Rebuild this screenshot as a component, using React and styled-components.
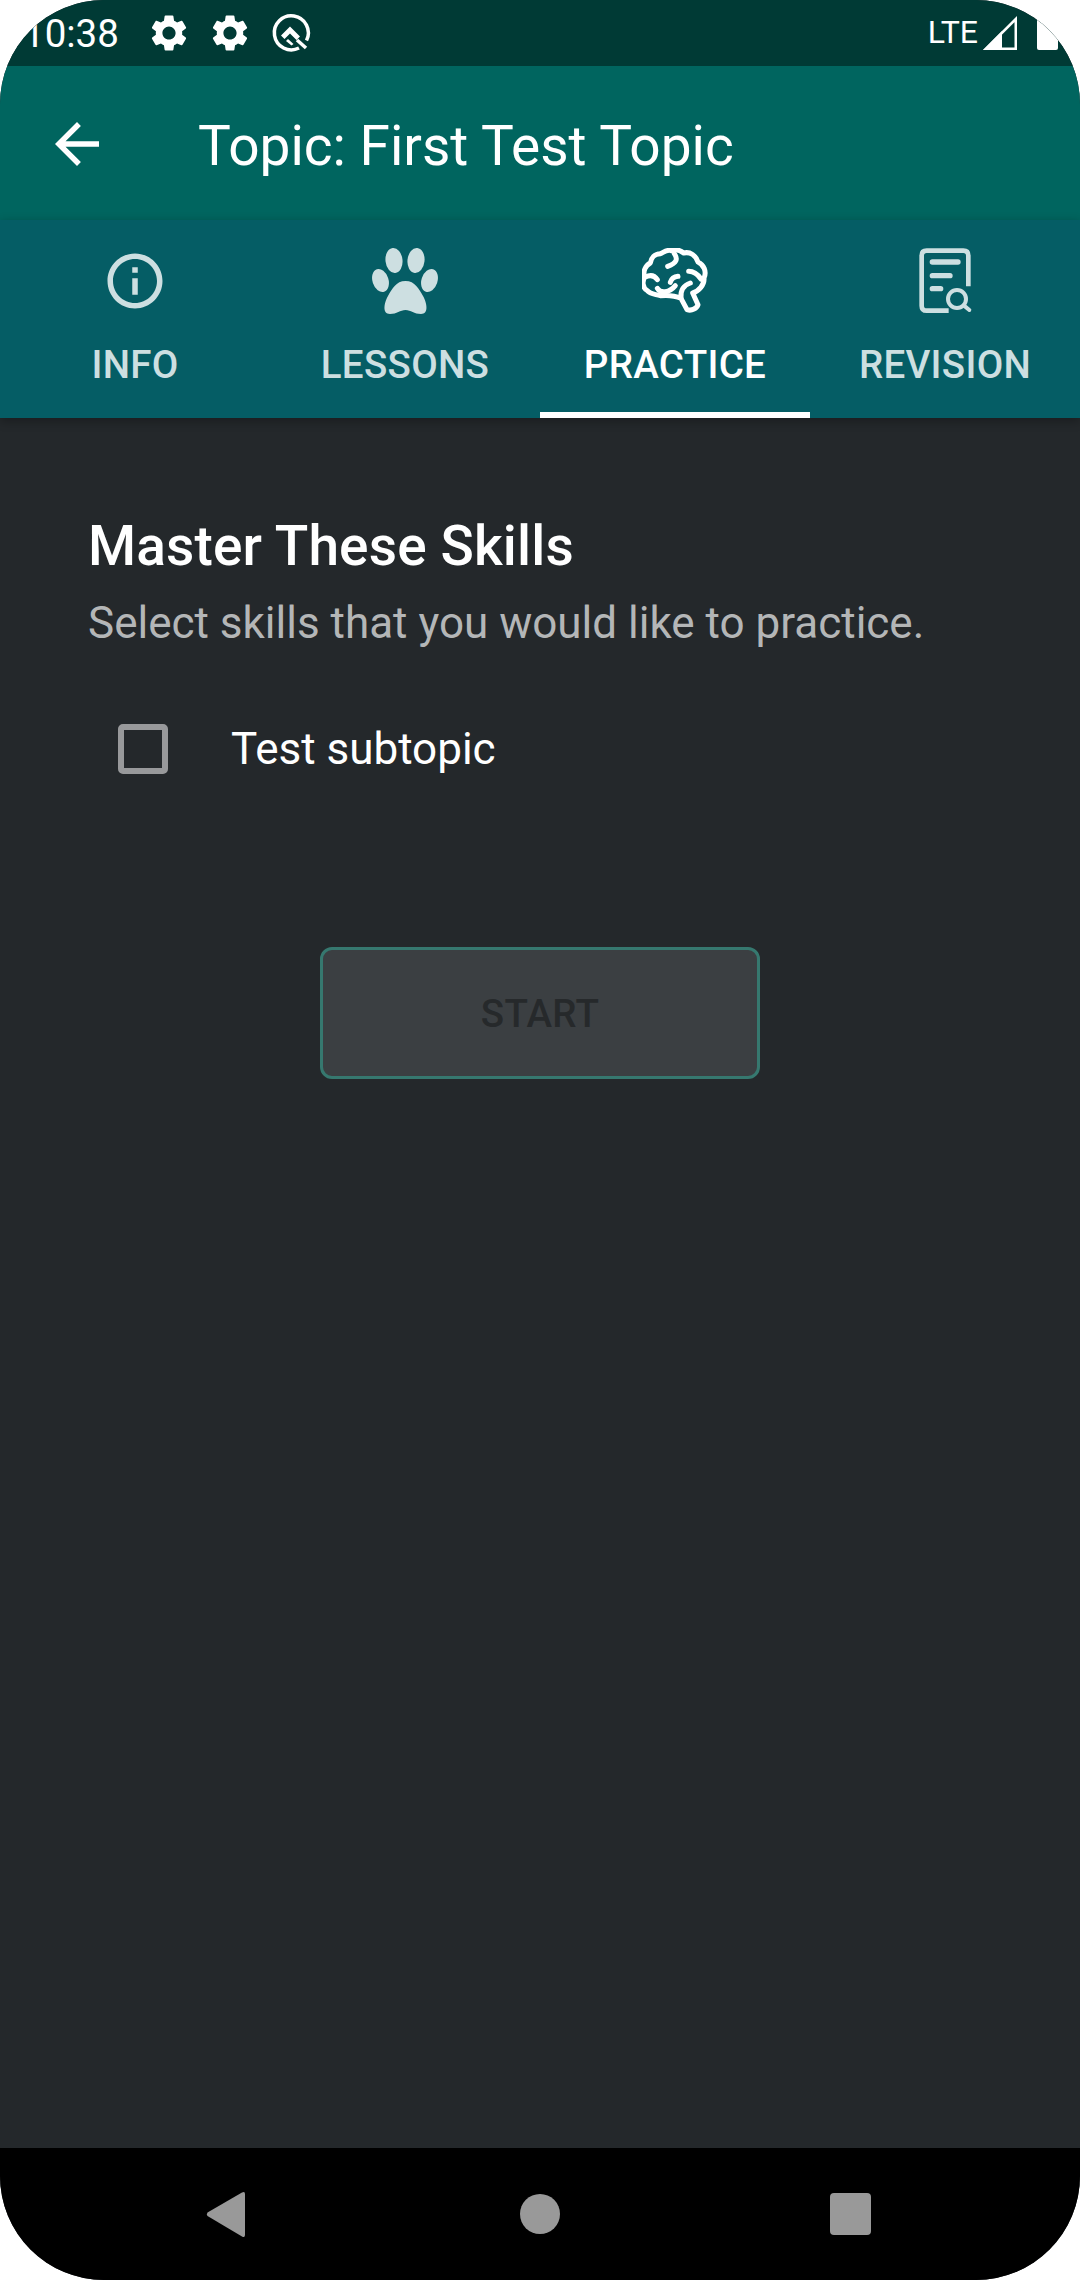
import React from 'react';
import styled, { createGlobalStyle } from 'styled-components';
import { MdArrowBack, MdInfoOutline, MdSettings } from 'react-icons/md';

const GlobalStyle = createGlobalStyle`
  body {
    margin: 0;
    background: #fff;
    font-family: Roboto, "Liberation Sans", sans-serif;
  }
`;

const Screen = styled.div`
  width: 1080px;
  height: 2280px;
  display: flex;
  flex-direction: column;
  overflow: hidden;
  border-radius: 104px;
  background: #24282b;
`;

const StatusBar = styled.div`
  height: 66px;
  flex: none;
  display: flex;
  align-items: center;
  justify-content: space-between;
  padding: 0 22px 0 23px;
  background: #003a35;
  color: #fff;
`;

const StatusGroup = styled.div`
  display: flex;
  align-items: center;
  gap: ${(p) => p.$gap || 0}px;
`;

const Time = styled.span`
  font-size: 38.5px;
  line-height: 44px;
  width: 107px;
  margin-top: 1px;
`;

const Lte = styled.span`
  font-size: 32px;
  line-height: 40px;
  margin: -2px 2px 0 0;
`;

const Battery = styled.div`
  width: 21px;
  height: 32px;
  margin: 2px 0 0 17px;
  border-radius: 2px;
  background: #fff;
`;

const AppBar = styled.div`
  height: 154px;
  flex: none;
  display: flex;
  align-items: center;
  background: #00655f;
  color: #fff;
`;

const BackButton = styled.div`
  width: 198px;
  padding-left: 44px;
  box-sizing: border-box;
  display: flex;
  font-size: 66px;
  margin-top: 2px;
`;

const Title = styled.h1`
  margin: 6px 0 0;
  font-size: 55px;
  font-weight: 400;
  line-height: 64px;
`;

const Tabs = styled.div`
  height: 198px;
  flex: none;
  display: grid;
  grid-template-columns: repeat(4, 270px);
  background: #055d65;
  position: relative;
  box-shadow: 0 3px 10px rgba(0, 0, 0, 0.3);
`;

const Tab = styled.div`
  display: flex;
  flex-direction: column;
  align-items: center;
  padding-top: 28px;
  box-sizing: border-box;
  color: ${(p) => (p.$active ? '#fff' : '#cddfe1')};
  border-bottom: 6px solid ${(p) => (p.$active ? '#fff' : 'transparent')};
`;

const TabIcon = styled.div`
  width: 66px;
  height: 66px;
  display: flex;
  font-size: 66px;
`;

const TabLabel = styled.div`
  margin-top: 29px;
  font-size: 38.5px;
  font-weight: 500;
  line-height: 44px;
  letter-spacing: 0.3px;
`;

const Content = styled.div`
  flex: 1;
  padding: 96px 88px 0;
  display: flex;
  flex-direction: column;
`;

const Heading = styled.h2`
  margin: 0;
  font-size: 55px;
  font-weight: 500;
  line-height: 64px;
  letter-spacing: 0.15px;
  color: #fff;
`;

const Subheading = styled.p`
  margin: 19px 0 0;
  font-size: 44px;
  line-height: 52px;
  color: #b4b6b7;
`;

const SkillRow = styled.label`
  display: flex;
  align-items: center;
  margin: 74px 0 0 30px;
  font-size: 44px;
  line-height: 52px;
  color: #fff;
`;

const Checkbox = styled.span`
  width: 50px;
  height: 50px;
  box-sizing: border-box;
  border: 6px solid #98999b;
  border-radius: 5px;
  margin-right: 63px;
`;

const StartButton = styled.button`
  align-self: center;
  width: 440px;
  height: 132px;
  margin-top: 172px;
  box-sizing: border-box;
  border: 3px solid #36786f;
  border-radius: 12px;
  background: #3b3f42;
  color: #26292b;
  font-family: inherit;
  font-size: 38.5px;
  font-weight: 500;
  letter-spacing: 0.3px;
  padding: 0;
`;

const NavBar = styled.div`
  height: 132px;
  flex: none;
  display: flex;
  align-items: center;
  gap: 246px;
  padding-left: 195px;
  background: #000;
  color: #999;
`;

const Gear = styled(MdSettings)`
  width: 44px;
  height: 44px;
`;

const QLogo = () => (
  <svg width="44" height="44" viewBox="0 0 44 44" fill="none" stroke="#fff">
    <path d="M37.5 29.5A17 17 0 1 0 30 37" strokeWidth="3.5" />
    <path d="M28 29l9 8" strokeWidth="3.5" />
    <path d="M12 24.5l9-9 10 10-3.500 3.500-6.500-6.500-5.500 5.500z" fill="#fff" stroke="none" />
    <path d="M17 30l2-2 5.500 5-2 1.500z" fill="#fff" stroke="none" />
  </svg>
);

const SignalIcon = () => (
  <svg width="40" height="40" viewBox="0 0 40 40" fill="none">
    <path d="M35.750 6V35.750H6Z" stroke="#fff" strokeWidth="2.500" />
    <path d="M3 37L22 18V37Z" fill="#fff" />
  </svg>
);

const PawIcon = () => (
  <svg width="66" height="66" viewBox="0 0 66 66" fill="currentColor">
    <ellipse cx="22" cy="12.500" rx="8.500" ry="12.500" transform="rotate(-6 22 12.500)" />
    <ellipse cx="44" cy="12.500" rx="8.500" ry="12.500" transform="rotate(6 44 12.500)" />
    <ellipse cx="8.500" cy="32.500" rx="8" ry="11.800" transform="rotate(-18 8.500 32.500)" />
    <ellipse cx="57.500" cy="32.500" rx="8" ry="11.800" transform="rotate(18 57.500 32.500)" />
    <path d="M33.500 33C24 33 20 41 16 48 12 55 10 66 18 66 25 66 28 62 33.500 62 39 62 42 66 49 66 57 66 55 55 51 48 47 41 43 33 33.500 33Z" />
  </svg>
);

const BrainIcon = () => (
  <svg width="66" height="66" viewBox="70 55 198 198" fill="none" stroke="currentColor" strokeWidth="15" strokeLinecap="round" strokeLinejoin="round">
    <path d="M158 63C145 58 135 68 125 72 108 72 97 85 95 100 80 108 72 125 78 142 70 155 72 175 85 182 95 195 110 193 125 198 145 196 165 196 187 206L205 240C220 245 235 235 238 225L222 190C240 185 258 165 256 145 265 125 255 105 238 97 232 78 215 65 195 70 183 60 168 58 158 63Z" />
    <path d="M167 72C178 88 175 100 147 110" />
    <path d="M80 142C95 135 108 138 116 150" />
    <path d="M210 125C225 125 238 135 247 148" />
    <path d="M155 158C158 148 165 141 178 140" />
    <path d="M116 176C125 192 152 190 170 168" />
    <path d="M187 204C185 182 195 167 215 160" />
  </svg>
);

const RevisionIcon = () => (
  <svg width="66" height="66" viewBox="36 55 198 198" fill="none" stroke="currentColor" strokeLinecap="round">
    <path d="M146 243H80Q65 243 65 228V78Q65 63 80 63H190Q205 63 205 78V170" strokeWidth="14" strokeLinecap="butt" />
    <path d="M97 97H174M97 138H150M97 177H122" strokeWidth="16" />
    <circle cx="171" cy="208" r="27" strokeWidth="12" />
    <path d="M192 228L208 241" strokeWidth="12" />
  </svg>
);

const App = () => {
  return (
    <Screen>
      <GlobalStyle />
      <StatusBar>
        <StatusGroup $gap={17}>
          <Time>10:38</Time>
          <Gear />
          <Gear />
          <QLogo />
        </StatusGroup>
        <StatusGroup>
          <Lte>LTE</Lte>
          <SignalIcon />
          <Battery />
        </StatusGroup>
      </StatusBar>
      <AppBar>
        <BackButton>
          <MdArrowBack />
        </BackButton>
        <Title>Topic: First Test Topic</Title>
      </AppBar>
      <Tabs>
        <Tab>
          <TabIcon><MdInfoOutline /></TabIcon>
          <TabLabel>INFO</TabLabel>
        </Tab>
        <Tab>
          <TabIcon><PawIcon /></TabIcon>
          <TabLabel>LESSONS</TabLabel>
        </Tab>
        <Tab $active>
          <TabIcon><BrainIcon /></TabIcon>
          <TabLabel>PRACTICE</TabLabel>
        </Tab>
        <Tab>
          <TabIcon><RevisionIcon /></TabIcon>
          <TabLabel>REVISION</TabLabel>
        </Tab>
      </Tabs>
      <Content>
        <Heading>Master These Skills</Heading>
        <Subheading>Select skills that you would like to practice.</Subheading>
        <SkillRow>
          <Checkbox />
          Test subtopic
        </SkillRow>
        <StartButton>START</StartButton>
      </Content>
      <NavBar>
        <svg width="66" height="66" viewBox="0 0 66 66" fill="currentColor">
          <path d="M12.500 35Q11 33.500 12.500 31.500L47 11.500Q50 10 50 13V54Q50 57 47 55.500Z" />
        </svg>
        <svg width="66" height="66" viewBox="0 0 66 66" fill="currentColor">
          <circle cx="33" cy="33" r="20" />
        </svg>
        <svg width="66" height="66" viewBox="0 0 66 66" fill="currentColor">
          <rect x="11" y="12" width="41" height="42" rx="4" />
        </svg>
      </NavBar>
    </Screen>
  );
};

export default App;
